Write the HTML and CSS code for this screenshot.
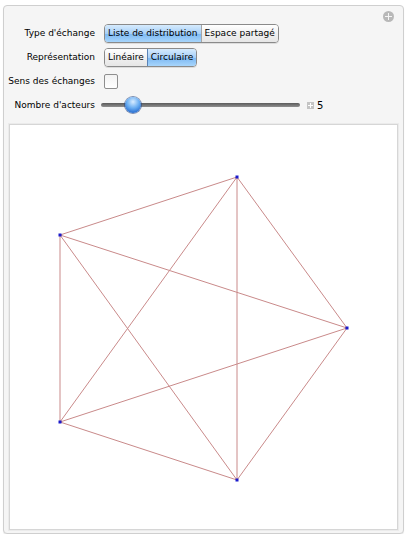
FILE: index.html
```html
<!DOCTYPE html>
<html lang="fr">
<head>
    <meta charset="UTF-8">
    <meta name="viewport" content="width=device-width, initial-scale=1.0">
    <title>Échanges entre acteurs</title>
    <link rel="stylesheet" href="styles.css">
</head>
<body>

    <div class="panel">
        <span class="close-btn"></span>

        <div class="controls">
            <label class="ctl-label">Type d'échange</label>
            <div class="seg">
                <span class="seg-item active">Liste de distribution</span>
                <span class="seg-item">Espace partagé</span>
            </div>

            <label class="ctl-label">Représentation</label>
            <div class="seg">
                <span class="seg-item">Linéaire</span>
                <span class="seg-item active">Circulaire</span>
            </div>

            <label class="ctl-label">Sens des échanges</label>
            <div class="ctl-row">
                <span class="checkbox"></span>
            </div>

            <label class="ctl-label">Nombre d'acteurs</label>
            <div class="ctl-row">
                <div class="slider">
                    <span class="slider-track"></span>
                    <span class="slider-thumb"></span>
                </div>
                <span class="plus-btn"></span>
                <span class="slider-value">5</span>
            </div>
        </div>

        <div class="plot">
            <svg id="graph" width="387" height="404" viewBox="0 0 387 404"></svg>
        </div>
    </div>

    <script>
        // points of the circular layout, in plot coordinates
        var pts = [[227, 52], [337, 203], [227, 355], [50, 297], [50, 110]];
        var svg = document.getElementById('graph');
        var ns = 'http://www.w3.org/2000/svg';

        // every actor exchanges with every other one
        for (var i = 0; i < pts.length; i++) {
            for (var j = i + 1; j < pts.length; j++) {
                var line = document.createElementNS(ns, 'line');
                line.setAttribute('x1', pts[i][0]);
                line.setAttribute('y1', pts[i][1]);
                line.setAttribute('x2', pts[j][0]);
                line.setAttribute('y2', pts[j][1]);
                line.setAttribute('class', 'edge');
                svg.appendChild(line);
            }
        }

        for (var k = 0; k < pts.length; k++) {
            var dot = document.createElementNS(ns, 'rect');
            dot.setAttribute('x', pts[k][0] - 1.5);
            dot.setAttribute('y', pts[k][1] - 1.5);
            dot.setAttribute('width', 3);
            dot.setAttribute('height', 3);
            dot.setAttribute('class', 'node');
            svg.appendChild(dot);
        }
    </script>

</body>
</html>
```

FILE: styles.css
```css
body {
    margin: 0;
    padding: 0;
    background-color: #fff;
    font-family: "DejaVu Sans", Verdana, sans-serif;
    font-size: 9px;
    color: #000;
}
.panel {
    position: relative;
    margin: 5px 5px 0 3px;
    height: 529px;
    background-color: #f5f5f5;
    border: 1px solid #cfcfcf;
    border-radius: 4px;
    box-shadow: 0 1px 1px rgba(0, 0, 0, 0.08);
    padding: 18px 5px 0 2px;
    box-sizing: border-box;
}
.close-btn {
    position: absolute;
    top: 5px;
    right: 9px;
    width: 11px;
    height: 11px;
    border-radius: 50%;
    background-color: #b8b8b8;
}
.close-btn::before,
.close-btn::after {
    content: "";
    position: absolute;
    background-color: #f5f5f5;
    left: 5px;
    top: 2px;
    width: 1px;
    height: 7px;
}
.close-btn::after {
    left: 2px;
    top: 5px;
    width: 7px;
    height: 1px;
}
.controls {
    display: grid;
    grid-template-columns: 89px auto;
    grid-auto-rows: 18px;
    column-gap: 9px;
    row-gap: 6px;
}
.ctl-label {
    display: flex;
    align-items: center;
    justify-content: flex-end;
    white-space: nowrap;
}
.ctl-row {
    display: flex;
    align-items: center;
}
.seg {
    display: flex;
    align-self: center;
    justify-self: start;
    height: 17px;
    border: 1px solid #8a8a8a;
    border-radius: 4px;
    overflow: hidden;
    box-shadow: 0 1px 0 rgba(0, 0, 0, 0.1);
}
.seg-item {
    display: flex;
    align-items: center;
    padding: 0 3px;
    background: linear-gradient(#ffffff, #f0f0f0 50%, #e6e6e6);
    border-left: 1px solid #a6a6a6;
}
.seg-item:first-child {
    border-left: none;
}
.seg-item.active {
    background: linear-gradient(#d6ebfd, #a6cff8 50%, #7fbaf3 55%, #a7d5fb);
    border-left-color: #5b83b6;
}
.checkbox {
    width: 12px;
    height: 13px;
    border: 1px solid #8e8e8e;
    border-radius: 2px;
    background: linear-gradient(#f2f2f2, #ffffff);
}
.slider {
    position: relative;
    width: 199px;
    height: 18px;
    margin-left: -3px;
}
.slider-track {
    position: absolute;
    left: 0;
    right: 0;
    top: 7px;
    height: 4px;
    border-radius: 2px;
    background: linear-gradient(#5a5a5a, #8f8f8f);
}
.slider-thumb {
    position: absolute;
    left: 24px;
    top: 1px;
    width: 16px;
    height: 16px;
    border-radius: 50%;
    background: radial-gradient(circle at 50% 30%, #d8ecff 0%, #6aaef2 45%, #2a6fd0 80%, #1d56aa 100%);
    box-shadow: 0 0 0 1px rgba(40, 70, 130, 0.6);
}
.plus-btn {
    position: relative;
    width: 7px;
    height: 7px;
    margin-left: 7px;
    background-color: #c4c4c4;
}
.plus-btn::before,
.plus-btn::after {
    content: "";
    position: absolute;
    background-color: #fff;
    left: 3px;
    top: 1px;
    width: 1px;
    height: 5px;
}
.plus-btn::after {
    left: 1px;
    top: 3px;
    width: 5px;
    height: 1px;
}
.slider-value {
    margin-left: 3px;
    font-size: 10px;
}
.plot {
    margin-top: 10px;
    margin-left: 3px;
    width: 389px;
    height: 406px;
    background-color: #fff;
    border: 1px solid #d6d6d6;
    box-shadow: 0 0 0 1px #ebebeb;
    box-sizing: border-box;
}
.plot svg {
    display: block;
}
.edge {
    stroke: #c98a8a;
    stroke-width: 1;
}
.node {
    fill: #1a1acc;
}
```
